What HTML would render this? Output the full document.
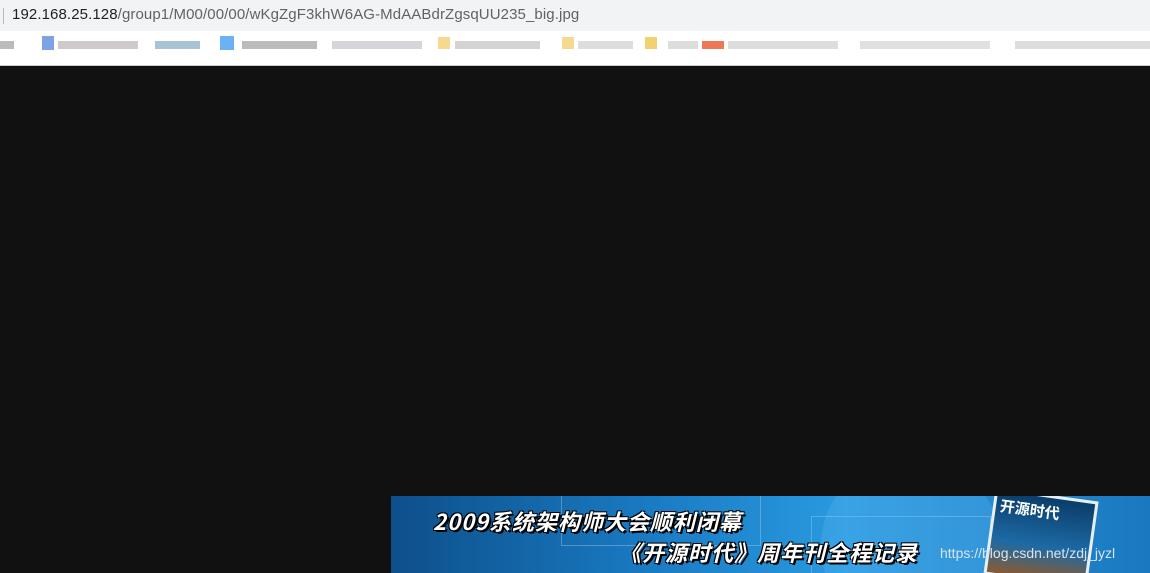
<!DOCTYPE html>
<html><head><meta charset="utf-8"><style>
*{margin:0;padding:0;box-sizing:border-box}
html,body{width:1150px;height:573px;overflow:hidden}
body{background:#111;font-family:"Liberation Sans","Noto Sans CJK SC",sans-serif;position:relative}
#addr{position:absolute;left:0;top:0;width:1150px;height:31px;background:#f1f3f4}
#addr .bar{position:absolute;left:3px;top:8px;width:1px;height:16px;background:#bbb}
#addr span{position:absolute;left:12px;top:6px;font-size:15px;color:#5f6368;white-space:nowrap;letter-spacing:0.1px}
#addr b{font-weight:normal;color:#202124}
#bm{position:absolute;left:0;top:31px;width:1150px;height:35px;background:#fff;border-bottom:1px solid #ccc}
.p{position:absolute;height:8px}
#banner{position:absolute;left:391px;top:496px;width:759px;height:77px;background:linear-gradient(90deg,#0d4f8a 0%,#1a7cc4 35%,#2a9ae0 60%,#1a78bf 100%);overflow:hidden}
.t{position:absolute;color:#fff;font-weight:bold;font-style:italic;font-size:22px;letter-spacing:1px;text-shadow:2px 2px 0 #000,-1px -1px 0 #000,1px -1px 0 #000,-1px 1px 0 #000;white-space:nowrap;font-family:"Noto Sans CJK SC",sans-serif;line-height:26px}
.wm{position:absolute;left:549px;top:49px;color:#d8e4ef;font-size:14px;white-space:nowrap;z-index:5}
.cover{position:absolute;left:598px;top:-2px;width:104px;height:88px;background:linear-gradient(#0a3d6a,#1d6aa5 60%,#8a5a30);border:3px solid #e8eef4;transform:rotate(8deg)}
.line{position:absolute;border:1px solid rgba(160,210,240,.4)}
</style></head><body>
<div id="addr"><div class="bar"></div><span><b>192.168.25.128</b>/group1/M00/00/00/wKgZgF3khW6AG-MdAABdrZgsqUU235_big.jpg</span></div>
<div id="bm">
<div class="p" style="left:0;top:10px;width:14px;background:#bbb"></div>
<div class="p" style="left:42px;top:5px;width:12px;height:14px;background:#7ba3e6"></div>
<div class="p" style="left:58px;top:10px;width:80px;background:#cfc9c9"></div>
<div class="p" style="left:155px;top:10px;width:45px;background:#a9c3d6"></div>
<div class="p" style="left:220px;top:5px;width:14px;height:14px;background:#6ab2f5"></div>
<div class="p" style="left:242px;top:10px;width:75px;background:#bbb"></div>
<div class="p" style="left:332px;top:10px;width:90px;background:#d6d6da"></div>
<div class="p" style="left:438px;top:6px;width:12px;height:12px;background:#f5d98f"></div>
<div class="p" style="left:455px;top:10px;width:85px;background:#d4d2d2"></div>
<div class="p" style="left:562px;top:6px;width:12px;height:12px;background:#f5d98f"></div>
<div class="p" style="left:578px;top:10px;width:55px;background:#ddd"></div>
<div class="p" style="left:645px;top:6px;width:12px;height:12px;background:#f3d070"></div>
<div class="p" style="left:668px;top:10px;width:30px;background:#ddd"></div>
<div class="p" style="left:702px;top:10px;width:22px;background:#ee7755"></div>
<div class="p" style="left:728px;top:10px;width:110px;background:#ddd"></div>
<div class="p" style="left:860px;top:10px;width:130px;background:#e0e0e0"></div>
<div class="p" style="left:1015px;top:10px;width:135px;background:#ddd"></div>
</div>
<div id="banner">
<div class="line" style="left:170px;top:-10px;width:200px;height:60px"></div>
<div class="line" style="left:420px;top:20px;width:180px;height:80px"></div>
<div style="position:absolute;left:430px;top:-40px;width:180px;height:180px;border-radius:50%;background:rgba(120,200,250,.2)"></div>
<div class="t" style="left:42px;top:12px">2009系统架构师大会顺利闭幕</div>
<div class="t" style="left:228px;top:43px">《开源时代》周年刊全程记录</div>
<div class="cover"><div style="color:#fff;font-weight:bold;font-size:15px;margin:4px;font-family:'Noto Sans CJK SC',sans-serif">开源时代</div></div>
<div class="wm">https://blog.csdn.net/zdj_jyzl</div>
</div>
</body></html>
